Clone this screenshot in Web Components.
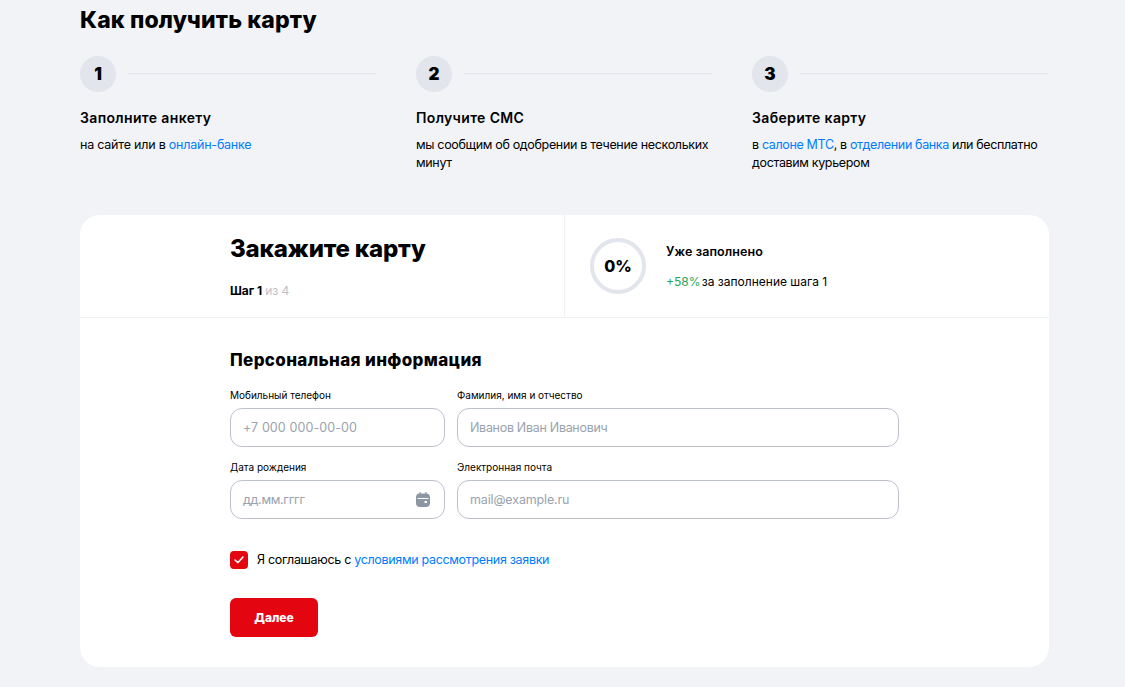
<!DOCTYPE html>
<html lang="ru">
<head>
<meta charset="utf-8">
<title>Как получить карту</title>
<style>
  html, body { margin: 0; background: #f2f3f7; }
  body { font-family: Inter, "Noto Sans", sans-serif; color: #000; overflow: hidden; height: 687px; }
</style>
</head>
<body>
<card-page>
  <how-steps>
    <step-item num="1" title="Заполните анкету">на сайте или в <a>онлайн-банке</a></step-item>
    <step-item num="2" title="Получите СМС" style="--ls:-0.33px">мы сообщим об одобрении в течение нескольких минут</step-item>
    <step-item num="3" title="Заберите карту" style="--ls:-0.35px">в <a>салоне МТС</a>, в <a>отделении банка</a> или бесплатно доставим курьером</step-item>
  </how-steps>
  <order-form></order-form>
</card-page>

<script>
const WIDE = 'Inter, "DejaVu Sans", sans-serif';

/**
 * Page wrapper, keeps the content in the central column.
 */
class CardPage extends HTMLElement {
  constructor() {
    super();
    this.attachShadow({ mode: 'open' });
    this.shadowRoot.innerHTML = `
      <style>
        :host { display: block; padding: 0 76px 0 80px; }
      </style>
      <slot></slot>
    `;
  }
}

/**
 * Heading and three columns of steps.
 */
class HowSteps extends HTMLElement {
  constructor() {
    super();
    this.attachShadow({ mode: 'open' });
    this.shadowRoot.innerHTML = `
      <style>
        :host { display: block; height: 215px; }
        h2 { margin: 0; padding-top: 5px; font: 800 23px/30px ${WIDE}; letter-spacing: 0.15px; }
        .cols { display: grid; grid-template-columns: repeat(3, 296px); column-gap: 40px; margin-top: 21px; }
      </style>
      <h2>Как получить карту</h2>
      <div class="cols"><slot></slot></div>
    `;
  }
}

/**
 * One step: number in a circle, line, title and description.
 */
class StepItem extends HTMLElement {
  constructor() {
    super();
    this.attachShadow({ mode: 'open' });
    this.shadowRoot.innerHTML = `
      <style>
        :host { display: block; }
        .top { display: flex; align-items: center; gap: 12px; height: 36px; }
        .num { width: 36px; height: 36px; border-radius: 50%; background: #e2e5ec; display: flex; align-items: center; justify-content: center; font: 900 17px/38px ${WIDE}; flex: none; }
        .line { flex: 1; height: 1px; background: #e2e5eb; margin-top: -2px; }
        h3 { margin: 16px 0 0; font: 600 14px/20px Inter, sans-serif; letter-spacing: 0.35px; }
        p { margin: 8px 0 0; font: 400 12.5px/18px Inter, sans-serif; letter-spacing: var(--ls, -0.22px); }
        ::slotted(a) { color: #007cff; }
      </style>
      <div class="top"><div class="num"></div><div class="line"></div></div>
      <h3></h3>
      <p><slot></slot></p>
    `;
    this.shadowRoot.querySelector('.num').textContent = this.getAttribute('num');
    this.shadowRoot.querySelector('h3').textContent = this.getAttribute('title');
  }
}

/**
 * Labelled text field, with an optional calendar icon.
 */
class FormField extends HTMLElement {
  constructor() {
    super();
    this.attachShadow({ mode: 'open' });
    this.shadowRoot.innerHTML = `
      <style>
        :host { display: block; }
        label { display: block; font: 400 10px/14px Inter, sans-serif; margin-bottom: 6px; white-space: nowrap; }
        .box { height: 37px; border: 1px solid #bcc1cc; border-radius: 12px; background: #fff; display: flex; align-items: center; justify-content: space-between; padding: 0 14px 0 12px; }
        .ph { font: 400 12.5px/18px Inter, sans-serif; letter-spacing: var(--ph-ls, -0.3px); color: #9aa3ad; padding-top: 1px; }
        svg { display: block; margin-top: -1px; }
      </style>
      <label></label>
      <div class="box"><span class="ph"></span><slot></slot></div>
    `;
    this.shadowRoot.querySelector('label').textContent = this.getAttribute('label');
    this.shadowRoot.querySelector('.ph').textContent = this.getAttribute('placeholder');
  }
}

/**
 * Card with the order form.
 */
class OrderForm extends HTMLElement {
  constructor() {
    super();
    this.attachShadow({ mode: 'open' });
    this.shadowRoot.innerHTML = `
      <style>
        :host { display: block; width: 969px; height: 452px; background: #fff; border-radius: 20px; }
        .head { display: grid; grid-template-columns: 485px 1fr; height: 102px; border-bottom: 1px solid #f0f1f4; }
        .left { padding: 18px 0 0 150px; border-right: 1px solid #f0f1f4; }
        h1 { margin: 0; font: 800 24px/32px ${WIDE}; letter-spacing: -0.2px; }
        .step { margin-top: 18px; font: 700 12px/16px Inter, sans-serif; }
        .step span { color: #bbc1c9; font-weight: 400; }
        .right { display: flex; align-items: center; gap: 20px; padding: 0 0 0 25px; }
        .ring { width: 48px; height: 48px; border: 4px solid #e2e5ec; border-radius: 50%; display: flex; align-items: center; justify-content: center; font: 800 16px/22px ${WIDE}; flex: none; }
        .done { padding-top: 2px; }
        .done b { display: block; font: 600 12.5px/16px Inter, sans-serif; letter-spacing: 0.1px; margin-top: -1px; }
        .done p { margin: 14px 0 0; font: 400 12px/16px Inter, sans-serif; }
        .done i { font-style: normal; color: #26a65b; margin-right: -2px; }
        .body { padding: 30px 0 0 150px; }
        h2 { margin: 0; font: 800 17px/24px ${WIDE}; letter-spacing: 0.35px; }
        .grid { display: grid; grid-template-columns: 215px 442px; gap: 13px 12px; margin-top: 16px; }
        .agree { display: flex; align-items: center; gap: 9px; margin-top: 31px; font: 400 12.5px/18px Inter, sans-serif; letter-spacing: -0.32px; }
        .agree span { padding-top: 1px; }
        .check { width: 18px; height: 18px; background: #e30611; border-radius: 4px; display: flex; align-items: center; justify-content: center; }
        a { color: #007cff; }
        button { display: block; margin-top: 29px; width: 88px; height: 39px; border: 0; border-radius: 6px; background: #e30611; color: #fff; font: 800 12px/16px Inter, sans-serif; padding: 0; }
      </style>
      <div class="head">
        <div class="left">
          <h1>Закажите карту</h1>
          <div class="step">Шаг 1 <span>из 4</span></div>
        </div>
        <div class="right">
          <div class="ring">0%</div>
          <div class="done">
            <b>Уже заполнено</b>
            <p><i>+58%</i> за заполнение шага 1</p>
          </div>
        </div>
      </div>
      <div class="body">
        <h2>Персональная информация</h2>
        <div class="grid">
          <form-field label="Мобильный телефон" placeholder="+7 000 000-00-00" style="--ph-ls:0.1px"></form-field>
          <form-field label="Фамилия, имя и отчество" placeholder="Иванов Иван Иванович"></form-field>
          <form-field label="Дата рождения" placeholder="дд.мм.гггг">
            <svg width="14" height="15" viewBox="0 0 14 15"><path fill="#8d96a3" d="M3.5 0h1.2v1.5h4.6V0h1.2v1.5C12.6 1.7 14 3 14 5v6c0 2.4-1.4 4-4 4H4c-2.6 0-4-1.6-4-4V5c0-2 1.4-3.3 3.5-3.5z"/><path fill="#fff" d="M1.5 6h11v1h-11z"/><path fill="#fff" d="M8.5 9h2.5v2H8.5z"/></svg>
          </form-field>
          <form-field label="Электронная почта" placeholder="mail@example.ru" style="--ph-ls:-0.15px"></form-field>
        </div>
        <div class="agree">
          <div class="check"><svg width="10" height="8" viewBox="0 0 10 8"><path d="M1 4l3 2.6L9 1" fill="none" stroke="#fff" stroke-width="1.5" stroke-linecap="round" stroke-linejoin="round"/></svg></div>
          <span>Я соглашаюсь с <a>условиями рассмотрения заявки</a></span>
        </div>
        <button>Далее</button>
      </div>
    `;
  }
}

customElements.define('card-page', CardPage);
customElements.define('how-steps', HowSteps);
customElements.define('step-item', StepItem);
customElements.define('form-field', FormField);
customElements.define('order-form', OrderForm);
</script>
</body>
</html>
